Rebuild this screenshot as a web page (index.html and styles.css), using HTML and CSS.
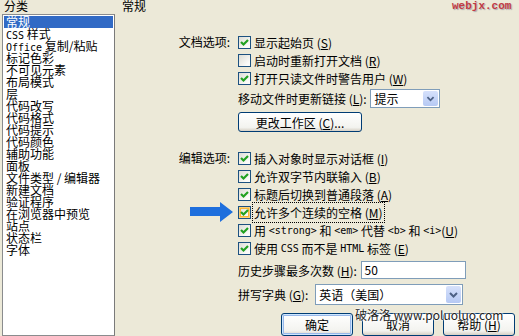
FILE: index.html
```html
<!DOCTYPE html>
<html lang="zh-CN">
<head>
    <meta charset="UTF-8">
    <title>首选参数 - 常规</title>
    <link rel="stylesheet" href="styles.css">
</head>
<body>
    <div class="dialog">
        <aside class="side">
            <div class="caption">分类</div>
            <ul class="cats">
                <li class="sel">常规</li>
                <li><span class="en">CSS</span> 样式</li>
                <li><span class="en">Office</span> 复制/粘贴</li>
                <li>标记色彩</li>
                <li>不可见元素</li>
                <li>布局模式</li>
                <li>层</li>
                <li>代码改写</li>
                <li>代码格式</li>
                <li>代码提示</li>
                <li>代码颜色</li>
                <li>辅助功能</li>
                <li>面板</li>
                <li>文件类型 / 编辑器</li>
                <li>新建文档</li>
                <li>验证程序</li>
                <li>在浏览器中预览</li>
                <li>站点</li>
                <li>状态栏</li>
                <li>字体</li>
            </ul>
        </aside>

        <main class="panel">
            <div class="caption title">常规</div>

            <!-- 文档选项 -->
            <section class="group doc">
                <div class="glabel">文档选项:</div>
                <div class="gbody">
                    <label class="row"><span class="box on"><svg viewBox="0 0 11 11"><path d="M2 5 L4.5 7.5 L9 3"/></svg></span>显示起始页 (<u>S</u>)</label>
                    <label class="row"><span class="box"></span>启动时重新打开文档 (<u>R</u>)</label>
                    <label class="row"><span class="box on"><svg viewBox="0 0 11 11"><path d="M2 5 L4.5 7.5 L9 3"/></svg></span>打开只读文件时警告用户 (<u>W</u>)</label>
                    <div class="row link">移动文件时更新链接 (<u>L</u>): <span class="select small"><span class="val">提示</span><span class="drop"><svg viewBox="0 0 15 17"><path d="M4 7 L7.5 10.5 L11 7"/></svg></span></span></div>
                    <button class="btn work">更改工作区 (<u>C</u>)...</button>
                </div>
            </section>

            <!-- 编辑选项 -->
            <section class="group edit">
                <div class="glabel">编辑选项:</div>
                <div class="gbody">
                    <label class="row"><span class="box on"><svg viewBox="0 0 11 11"><path d="M2 5 L4.5 7.5 L9 3"/></svg></span>插入对象时显示对话框 (<u>I</u>)</label>
                    <label class="row"><span class="box on"><svg viewBox="0 0 11 11"><path d="M2 5 L4.5 7.5 L9 3"/></svg></span>允许双字节内联输入 (<u>B</u>)</label>
                    <label class="row"><span class="box on"><svg viewBox="0 0 11 11"><path d="M2 5 L4.5 7.5 L9 3"/></svg></span>标题后切换到普通段落 (<u>A</u>)</label>
                    <label class="row"><span class="box on hot"><svg viewBox="0 0 11 11"><path d="M2 5 L4.5 7.5 L9 3"/></svg></span><span class="focus">允许多个连续的空格 (<u>M</u>)</span></label>
                    <label class="row"><span class="box on"><svg viewBox="0 0 11 11"><path d="M2 5 L4.5 7.5 L9 3"/></svg></span>用 <span class="en">&lt;strong&gt;</span> 和 <span class="en">&lt;em&gt;</span> 代替 <span class="en">&lt;b&gt;</span> 和 <span class="en">&lt;i&gt;</span>(<u>U</u>)</label>
                    <label class="row"><span class="box on"><svg viewBox="0 0 11 11"><path d="M2 5 L4.5 7.5 L9 3"/></svg></span>使用 <span class="en">CSS</span> 而不是 <span class="en">HTML</span> 标签 (<u>E</u>)</label>
                </div>
            </section>

            <div class="line history">历史步骤最多次数 (<u>H</u>): <span class="input">50</span></div>
            <div class="line spell">拼写字典 (<u>G</u>): <span class="select wide"><span class="val">英语（美国）</span><span class="drop"><svg viewBox="0 0 15 17"><path d="M4 7 L7.5 10.5 L11 7"/></svg></span></span></div>

            <div class="actions">
                <button class="btn def">确定</button>
                <button class="btn">取消</button>
                <button class="btn">帮助 (<u>H</u>)</button>
            </div>
        </main>
    </div>

    <svg class="arrow" viewBox="0 0 44 21"><polygon points="0,5 30,5 30,0 43,10 30,20 30,14 0,14"/></svg>
    <div class="mark mark-top">webjx.com</div>
    <div class="mark mark-bottom">破洛洛 www.poluoluo.com</div>
</body>
</html>
```

FILE: styles.css
```css
body {
    margin: 0;
    width: 519px;
    height: 336px;
    overflow: hidden;
    background: #ece9d8;
    font-family: "Noto Sans CJK SC", "Liberation Sans", sans-serif;
    font-size: 12px;
    color: #000;
    position: relative;
}
u {
    text-decoration: underline;
    text-underline-offset: 1px;
}
.dialog {
    display: flex;
    height: 336px;
}
.caption {
    height: 14px;
    line-height: 12px;
    padding-left: 4px;
}
.side {
    width: 115px;
    display: flex;
    flex-direction: column;
}
.cats {
    list-style: none;
    margin: 0 0 0 2px;
    padding: 1px 0 40px 0;
    flex: 1;
    background: #fff;
    border: 1px solid #8a8c8e;
    border-right-color: #7a7a7a;
}
.cats li {
    height: 12px;
    line-height: 12px;
    margin: 0 1px;
    padding-left: 2px;
    white-space: nowrap;
}
.cats li.sel {
    background: #316ac5;
    color: #fff;
}

.panel {
    flex: 1;
    display: flex;
    flex-direction: column;
}
.title {
    padding-left: 7px;
}

.group {
    display: flex;
}
.group.doc {
    margin-top: 19px;
}
.group.edit {
    margin-top: 17px;
}
.glabel {
    width: 115px;
    margin-right: 8px;
    text-align: right;
    line-height: 18px;
}
.gbody {
    display: flex;
    flex-direction: column;
    align-items: flex-start;
}
.row {
    height: 18px;
    display: flex;
    align-items: center;
    white-space: pre;
}
.box {
    width: 13px;
    height: 13px;
    box-sizing: border-box;
    margin-right: 3px;
    border: 1px solid #1c5180;
    background: linear-gradient(135deg, #dcdcd5, #fbfbf9 80%);
    display: inline-flex;
    align-items: center;
    justify-content: center;
}
.box svg {
    width: 11px;
    height: 11px;
}
.box svg path {
    fill: none;
    stroke: #21a121;
    stroke-width: 2.2;
}
.box.hot {
    box-shadow: inset 0 0 0 1px #fcd07a, inset 0 0 0 2px #f8b636;
}
.focus {
    outline: 1px dotted #000;
    outline-offset: 1px;
}
.en {
    font-family: "DejaVu Sans Mono", monospace;
    font-size: 10px;
}

.link {
    height: 23px;
}
.select {
    display: inline-flex;
    align-items: stretch;
    box-sizing: border-box;
    border: 1px solid #7f9db9;
    background: #fff;
    margin-left: 1px;
}
.select .val {
    flex: 1;
    padding-left: 3px;
    display: flex;
    align-items: center;
}
.select .drop {
    width: 15px;
    margin: 1px;
    background: linear-gradient(#d6e1fb, #b6c9f4);
    border-radius: 2px;
}
.select .drop svg {
    width: 15px;
    height: 100%;
    display: block;
}
.select .drop path {
    fill: none;
    stroke: #4d6185;
    stroke-width: 2;
}
.select.small {
    width: 70px;
    height: 19px;
}

.btn {
    box-sizing: border-box;
    border: 1px solid #003c74;
    border-radius: 3px;
    background: linear-gradient(#ffffff, #f3f3ef 80%, #d6d0c5);
    font: inherit;
    color: #000;
    padding: 0;
    white-space: nowrap;
}
.btn.work {
    width: 124px;
    height: 20px;
    margin-top: 2px;
}

.line {
    margin-left: 123px;
    height: 22px;
    display: flex;
    align-items: center;
    white-space: pre;
}
.history {
    margin-top: 2px;
}
.input {
    box-sizing: border-box;
    width: 105px;
    height: 18px;
    margin-left: 1px;
    border: 1px solid #7f9db9;
    background: #fff;
    padding-left: 3px;
    line-height: 16px;
}
.spell {
    margin-top: 2px;
}
.select.wide {
    width: 148px;
    height: 21px;
    margin-left: 4px;
}

.actions {
    display: flex;
    justify-content: flex-end;
    gap: 9px;
    margin-top: 8px;
    padding-right: 4px;
}
.actions .btn {
    width: 72px;
    height: 23px;
}
.btn.def {
    box-shadow: inset 0 0 0 1px #cee7ff, inset 0 0 0 2px #98b8ea;
}

.arrow {
    position: absolute;
    left: 190px;
    top: 202px;
    width: 44px;
    height: 21px;
}
.arrow polygon {
    fill: #1e6fdd;
}
.mark {
    position: absolute;
    white-space: pre;
}
.mark-top {
    left: 452px;
    top: 0;
    font-family: "Liberation Mono", monospace;
    font-size: 11px;
    font-weight: bold;
    line-height: 12px;
    color: #c23a44;
    text-shadow: 1px 1px 1px #aaa;
}
.mark-bottom {
    left: 355px;
    top: 308px;
    font-size: 12px;
    line-height: 14px;
    color: #222;
    text-shadow: 0 0 2px #fff, 0 0 2px #fff, 0 0 2px #fff;
}
```
